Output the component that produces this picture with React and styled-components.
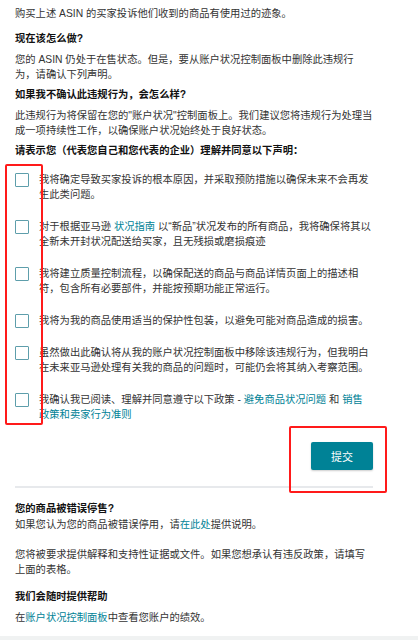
import styled, { createGlobalStyle } from "styled-components";

const GlobalStyle = createGlobalStyle`
  html, body {
    margin: 0;
    padding: 0;
    background: #ffffff;
  }
  body {
    font-family: "Liberation Sans", "Noto Sans CJK SC", sans-serif;
    font-size: 10.3px;
    line-height: 15px;
    color: #333333;
  }
`;

const getStatements = () => [
  { id: 1, content: "我将确定导致买家投诉的根本原因，并采取预防措施以确保未来不会再发生此类问题。" },
  {
    id: 2,
    content: (
      <>
        对于根据亚马逊 <Link>状况指南</Link> 以“新品”状况发布的所有商品，我将确保将其以全新未开封状况配送给买家，且无残损或磨损痕迹
      </>
    ),
  },
  { id: 3, content: "我将建立质量控制流程，以确保配送的商品与商品详情页面上的描述相符，包含所有必要部件，并能按预期功能正常运行。" },
  { id: 4, content: "我将为我的商品使用适当的保护性包装，以避免可能对商品造成的损害。" },
  { id: 5, content: "虽然做出此确认将从我的账户状况控制面板中移除该违规行为，但我明白在未来亚马逊处理有关我的商品的问题时，可能仍会将其纳入考察范围。" },
  {
    id: 6,
    content: (
      <>
        我确认我已阅读、理解并同意遵守以下政策 - <Link>避免商品状况问题</Link> 和 <Link>销售政策和卖家行为准则</Link>
      </>
    ),
  },
];

const App = () => {
  const statements = getStatements();
  return (
    <>
      <GlobalStyle />
      <Page>
        <Content>
          <Intro>购买上述 ASIN 的买家投诉他们收到的商品有使用过的迹象。</Intro>
          <Heading>现在该怎么做?</Heading>
          <Para>您的 ASIN 仍处于在售状态。但是，要从账户状况控制面板中删除此违规行为，请确认下列声明。</Para>
          <Heading>如果我不确认此违规行为，会怎么样?</Heading>
          <Para>此违规行为将保留在您的"账户状况"控制面板上。我们建议您将违规行为处理当成一项持续性工作，以确保账户状况始终处于良好状态。</Para>
          <Heading>请表示您（代表您自己和您代表的企业）理解并同意以下声明：</Heading>
          <CheckList>
            <RedFrame $left="-10px" $top="-9px" $width="38px" $bottom="-3px" />
            {statements.map((item) => (
              <CheckRow key={item.id}>
                <Box type="button" aria-label="checkbox" />
                <RowText>{item.content}</RowText>
              </CheckRow>
            ))}
          </CheckList>
          <SubmitArea>
            <RedFrame $left="274px" $top="-16px" $width="98px" $bottom="-5px" />
            <ButtonRow>
              <SubmitButton type="button">提交</SubmitButton>
            </ButtonRow>
            <Divider />
          </SubmitArea>
          <Section>
            <Heading $flush>您的商品被错误停售?</Heading>
            <SectionText>
              如果您认为您的商品被错误停用，请<Link>在此处</Link>提供说明。
              <br />
              <br />
              您将被要求提供解释和支持性证据或文件。如果您想承认有违反政策，请填写上面的表格。
            </SectionText>
          </Section>
          <Heading $gap="12px">我们会随时提供帮助</Heading>
          <Para>
            在<Link>账户状况控制面板</Link>中查看您账户的绩效。
          </Para>
        </Content>
        <BottomBar />
      </Page>
    </>
  );
};

const Page = styled.div`
  display: flex;
  flex-direction: column;
  min-height: 640px;
`;

const Content = styled.div`
  width: 358px;
  padding: 6px 15px 0;
  display: flex;
  flex-direction: column;
`;

const Intro = styled.p`
  margin: 0 0 10px;
`;

const Heading = styled.h4`
  margin: ${(p) => (p.$flush ? "0" : p.$gap || "0")} 0 ${(p) => (p.$flush ? "1px" : "6px")};
  font-size: 10.3px;
  line-height: 15px;
  font-weight: 700;
  color: #111111;
`;

const Para = styled.p`
  margin: 0 0 5px;
`;

const SectionText = styled.p`
  margin: 0;
`;

const Link = styled.a`
  color: #008296;
  text-decoration: none;
  cursor: pointer;
`;

const CheckList = styled.div`
  position: relative;
  display: flex;
  flex-direction: column;
  gap: 18px;
  margin-top: 9px;
`;

const RedFrame = styled.div`
  position: absolute;
  left: ${(p) => p.$left};
  top: ${(p) => p.$top};
  bottom: ${(p) => p.$bottom};
  width: ${(p) => p.$width};
  border: 2px solid #ff1a1a;
  border-radius: 2px;
  box-sizing: border-box;
  pointer-events: none;
`;

const CheckRow = styled.div`
  display: flex;
  align-items: flex-start;
  gap: 10px;
`;

const Box = styled.button`
  flex: none;
  width: 14px;
  height: 14px;
  margin: 0;
  padding: 0;
  border: 1px solid #5e9eab;
  border-radius: 1px;
  background: #ffffff;
`;

const RowText = styled.div`
  flex: 1;
  margin-top: -1px;
  color: #333333;
`;

const SubmitArea = styled.div`
  position: relative;
  display: flex;
  flex-direction: column;
  margin-top: 20px;
`;

const ButtonRow = styled.div`
  display: flex;
  justify-content: flex-end;
`;

const SubmitButton = styled.button`
  width: 62px;
  height: 28px;
  border: none;
  border-radius: 2px;
  background: #008296;
  color: #ffffff;
  font-family: "Liberation Sans", "Noto Sans CJK SC", sans-serif;
  font-size: 11px;
  box-shadow: 0 1px 2px rgba(0, 0, 0, 0.2);
`;

const Divider = styled.div`
  margin-top: 16px;
  height: 2px;
  background: #e7e9ec;
`;

const Section = styled.div`
  margin-top: 13px;
`;

const BottomBar = styled.div`
  margin-top: auto;
  height: 4px;
  background: #f0f2f2;
`;

export default App;
